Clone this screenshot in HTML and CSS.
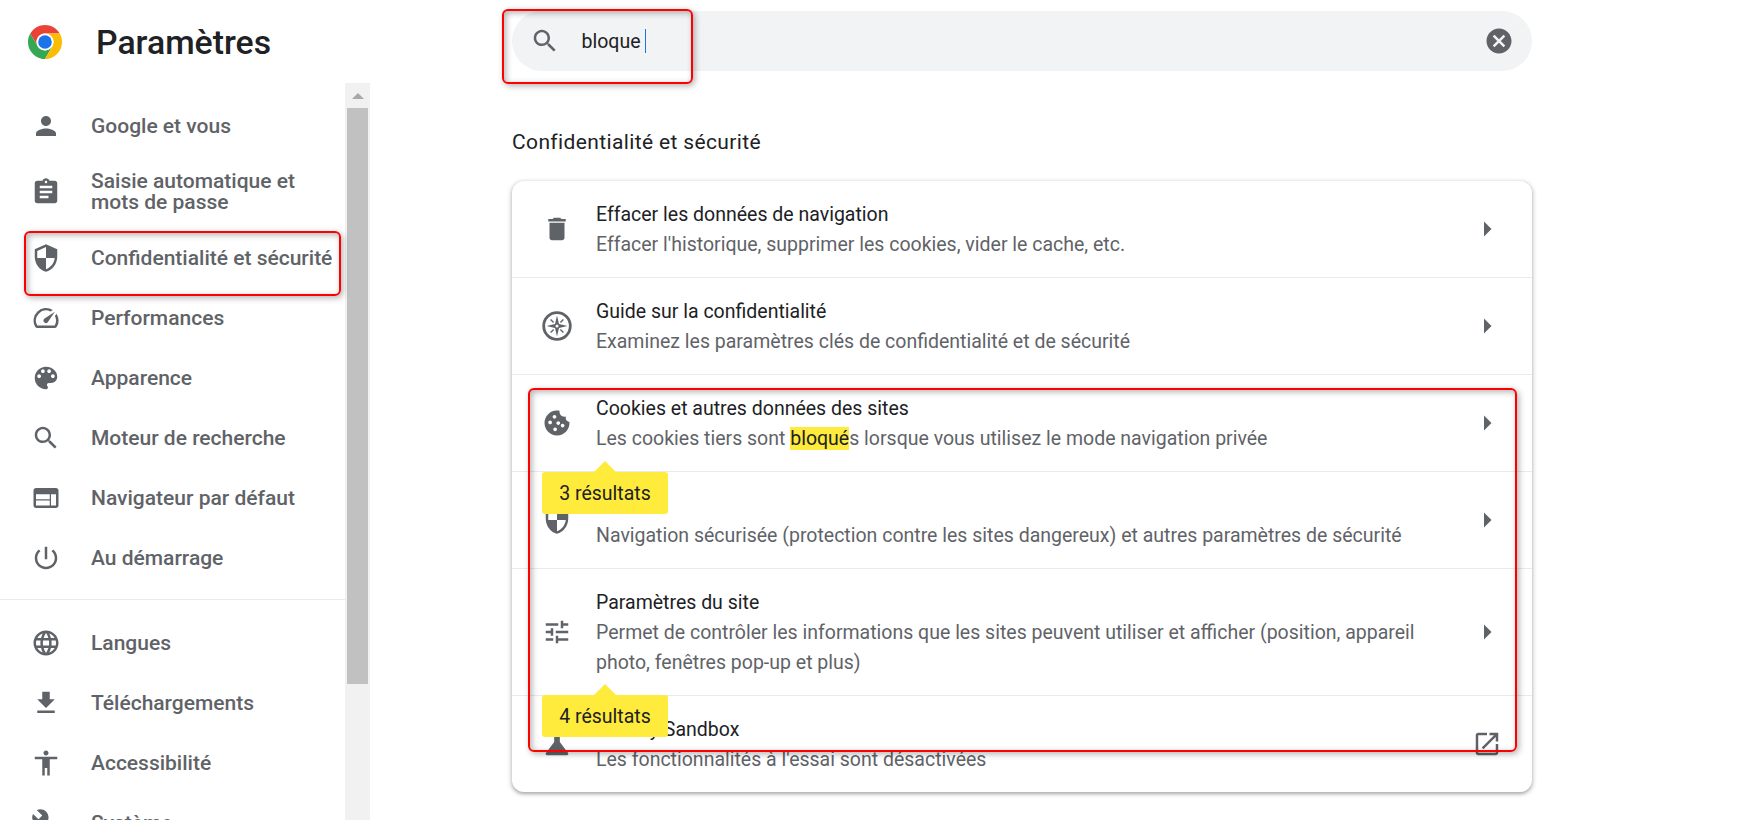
FILE: index.html
```html
<!DOCTYPE html>
<html lang="fr">
<head>
    <meta charset="UTF-8">
    <meta name="viewport" content="width=device-width, initial-scale=1.0">
    <title>Paramètres</title>
    <link rel="stylesheet" href="styles.css">
</head>
<body>

<aside class="sidebar">
    <header class="brand">
        <svg class="logo" viewBox="4 4 40 40">
            <path fill="#ea4335" d="M41.32 14H24a10 10 0 0 0-8.66 15L6.68 14A20 20 0 0 1 41.32 14z"/>
            <path fill="#34a853" d="M6.68 14l8.66 15a10 10 0 0 0 17.32 0L24 44A20 20 0 0 1 6.68 14z"/>
            <path fill="#fbbc04" d="M41.32 14H24a10 10 0 0 1 8.66 15L24 44A20 20 0 0 0 41.32 14z"/>
            <circle cx="24" cy="24" r="10" fill="#fff"/>
            <circle cx="24" cy="24" r="8" fill="#1a73e8"/>
        </svg>
        <h1>Paramètres</h1>
    </header>

    <div class="nav-wrap">
        <nav class="nav">
            <a class="nav-item">
                <svg class="icon" viewBox="0 0 24 24"><path d="M12 12c2.21 0 4-1.79 4-4s-1.79-4-4-4-4 1.79-4 4 1.79 4 4 4zm0 2c-2.67 0-8 1.34-8 4v2h16v-2c0-2.66-5.33-4-8-4z"/></svg>
                <span>Google et vous</span>
            </a>
            <a class="nav-item nav-item-tall">
                <svg class="icon" viewBox="0 0 24 24"><path d="M19 3h-4.18C14.4 1.84 13.3 1 12 1c-1.3 0-2.4.84-2.82 2H5c-1.1 0-2 .9-2 2v14c0 1.1.9 2 2 2h14c1.1 0 2-.9 2-2V5c0-1.1-.9-2-2-2zm-7 0c.55 0 1 .45 1 1s-.45 1-1 1-1-.45-1-1 .45-1 1-1zm2 14H7v-2h7v2zm3-4H7v-2h10v2zm0-4H7V7h10v2z"/></svg>
                <span>Saisie automatique et mots de passe</span>
            </a>
            <a class="nav-item">
                <svg class="icon" viewBox="0 0 24 24"><path d="M12 1L3 5v6c0 5.55 3.84 10.74 9 12 5.16-1.26 9-6.45 9-12V5l-9-4zm0 10.99h7c-.53 4.12-3.28 7.79-7 8.94V12H5V6.3l7-3.11v8.8z"/></svg>
                <span>Confidentialité et sécurité</span>
            </a>
            <a class="nav-item">
                <svg class="icon" viewBox="0 0 24 24"><path d="M20.38 8.57l-1.23 1.85a8 8 0 0 1-.22 7.58H5.07A8 8 0 0 1 15.58 6.85l1.85-1.23A10 10 0 0 0 3.35 19a2 2 0 0 0 1.72 1h13.85a2 2 0 0 0 1.74-1 10 10 0 0 0-.27-10.44zm-9.79 6.84a2 2 0 0 0 2.83 0l5.66-8.49-8.49 5.66a2 2 0 0 0 0 2.83z"/></svg>
                <span>Performances</span>
            </a>
            <a class="nav-item">
                <svg class="icon" viewBox="0 0 24 24"><path d="M12 3c-4.97 0-9 4.03-9 9s4.03 9 9 9c.83 0 1.5-.67 1.5-1.5 0-.39-.15-.74-.39-1.01-.23-.26-.38-.61-.38-.99 0-.83.67-1.5 1.5-1.5H16c2.76 0 5-2.24 5-5 0-4.42-4.03-8-9-8zm-5.5 9c-.83 0-1.5-.67-1.5-1.5S5.67 9 6.5 9 8 9.67 8 10.5 7.33 12 6.5 12zm3-4C8.67 8 8 7.33 8 6.5S8.67 5 9.5 5s1.5.67 1.5 1.5S10.33 8 9.5 8zm5 0c-.83 0-1.5-.67-1.5-1.5S13.67 5 14.5 5s1.5.67 1.5 1.5S15.33 8 14.5 8zm3 4c-.83 0-1.5-.67-1.5-1.5S16.67 9 17.5 9s1.5.67 1.5 1.5-.67 1.5-1.5 1.5z"/></svg>
                <span>Apparence</span>
            </a>
            <a class="nav-item">
                <svg class="icon" viewBox="0 0 24 24"><path d="M15.5 14h-.79l-.28-.27C15.41 12.59 16 11.11 16 9.5 16 5.91 13.09 3 9.5 3S3 5.91 3 9.5 5.91 16 9.5 16c1.61 0 3.09-.59 4.23-1.57l.27.28v.79l5 4.99L20.49 19l-4.99-5zm-6 0C7.01 14 5 11.99 5 9.5S7.01 5 9.5 5 14 7.01 14 9.5 11.99 14 9.5 14z"/></svg>
                <span>Moteur de recherche</span>
            </a>
            <a class="nav-item">
                <svg class="icon" viewBox="0 0 24 24"><path d="M20 4H4c-1.1 0-2 .9-2 2v12c0 1.1.9 2 2 2h16c1.1 0 2-.9 2-2V6c0-1.1-.9-2-2-2zm-5 14H4v-4h11v4zm0-5H4V9h11v4zm5 5h-4V9h4v9z"/></svg>
                <span>Navigateur par défaut</span>
            </a>
            <a class="nav-item">
                <svg class="icon" viewBox="0 0 24 24"><path d="M13 3h-2v10h2V3zm4.83 2.17l-1.42 1.42C17.99 7.86 19 9.81 19 12c0 3.87-3.13 7-7 7s-7-3.13-7-7c0-2.19 1.01-4.14 2.58-5.42L6.17 5.17C4.23 6.82 3 9.26 3 12c0 4.97 4.03 9 9 9s9-4.03 9-9c0-2.74-1.23-5.18-3.17-6.83z"/></svg>
                <span>Au démarrage</span>
            </a>
            <div class="nav-sep"></div>
            <a class="nav-item">
                <svg class="icon" viewBox="0 0 24 24"><path d="M11.99 2C6.47 2 2 6.48 2 12s4.47 10 9.99 10C17.52 22 22 17.52 22 12S17.52 2 11.99 2zm6.93 6h-2.95c-.32-1.25-.78-2.45-1.38-3.56 1.84.63 3.37 1.91 4.33 3.56zM12 4.04c.83 1.2 1.48 2.53 1.91 3.96h-3.82c.43-1.43 1.08-2.76 1.91-3.96zM4.26 14C4.1 13.36 4 12.69 4 12s.1-1.36.26-2h3.38c-.08.66-.14 1.32-.14 2 0 .68.06 1.34.14 2H4.26zm.82 2h2.95c.32 1.25.78 2.45 1.38 3.56-1.84-.63-3.37-1.9-4.33-3.56zm2.95-8H5.08c.96-1.66 2.49-2.93 4.33-3.56C8.81 5.55 8.35 6.75 8.03 8zM12 19.96c-.83-1.2-1.48-2.53-1.91-3.96h3.82c-.43 1.43-1.08 2.76-1.91 3.96zM14.34 14H9.66c-.09-.66-.16-1.32-.16-2 0-.68.07-1.35.16-2h4.68c.09.65.16 1.32.16 2 0 .68-.07 1.34-.16 2zm.25 5.56c.6-1.11 1.06-2.31 1.38-3.56h2.95c-.96 1.65-2.49 2.93-4.33 3.56zM16.36 14c.08-.66.14-1.32.14-2 0-.68-.06-1.34-.14-2h3.38c.16.64.26 1.31.26 2s-.1 1.36-.26 2h-3.38z"/></svg>
                <span>Langues</span>
            </a>
            <a class="nav-item">
                <svg class="icon" viewBox="0 0 24 24"><path d="M19 9h-4V3H9v6H5l7 7 7-7zM5 18v2h14v-2H5z"/></svg>
                <span>Téléchargements</span>
            </a>
            <a class="nav-item">
                <svg class="icon" viewBox="0 0 24 24"><path d="M12 2c1.1 0 2 .9 2 2s-.9 2-2 2-2-.9-2-2 .9-2 2-2zm9 7h-6v13h-2v-6h-2v6H9V9H3V7h18v2z"/></svg>
                <span>Accessibilité</span>
            </a>
            <a class="nav-item">
                <svg class="icon" viewBox="0 0 24 24"><path d="M22.7 19l-9.1-9.1c.9-2.3.4-5-1.5-6.9-2-2-5-2.4-7.4-1.3L9 6 6 9 1.6 4.7C.4 7.1.9 10.1 2.9 12.1c1.9 1.9 4.6 2.4 6.9 1.5l9.1 9.1c.4.4 1 .4 1.4 0l2.3-2.3c.5-.4.5-1.1.1-1.4z"/></svg>
                <span>Système</span>
            </a>
        </nav>
        <div class="scrollbar">
            <div class="scroll-up"></div>
            <div class="scroll-thumb"></div>
        </div>
    </div>
</aside>

<main class="main">
    <div class="search">
        <svg class="icon" viewBox="0 0 24 24"><path d="M15.5 14h-.79l-.28-.27C15.41 12.59 16 11.11 16 9.5 16 5.91 13.09 3 9.5 3S3 5.91 3 9.5 5.91 16 9.5 16c1.61 0 3.09-.59 4.23-1.57l.27.28v.79l5 4.99L20.49 19l-4.99-5zm-6 0C7.01 14 5 11.99 5 9.5S7.01 5 9.5 5 14 7.01 14 9.5 11.99 14 9.5 14z"/></svg>
        <span class="search-text">bloque</span>
        <span class="caret"></span>
        <svg class="icon search-clear" viewBox="0 0 24 24"><path d="M12 2C6.47 2 2 6.47 2 12s4.47 10 10 10 10-4.47 10-10S17.53 2 12 2zm5 13.59L15.59 17 12 13.41 8.41 17 7 15.59 10.59 12 7 8.41 8.41 7 12 10.59 15.59 7 17 8.41 13.41 12 17 15.59z"/></svg>
    </div>

    <h2 class="section-title">Confidentialité et sécurité</h2>

    <section class="card">
        <div class="row">
            <div class="row-icon">
                <svg class="icon" viewBox="0 0 24 24"><path d="M6 19c0 1.1.9 2 2 2h8c1.1 0 2-.9 2-2V7H6v12zM19 4h-3.5l-1-1h-5l-1 1H5v2h14V4z"/></svg>
            </div>
            <div class="row-text">
                <div class="row-title">Effacer les données de navigation</div>
                <div class="row-sub">Effacer l'historique, supprimer les cookies, vider le cache, etc.</div>
            </div>
            <div class="row-action">
                <svg class="arrow" viewBox="0 0 24 24"><path d="M10 17l5-5-5-5v10z"/></svg>
            </div>
        </div>
        <div class="row">
            <div class="row-icon">
                <svg class="icon" viewBox="0 0 30 30">
                    <circle class="compass-ring" cx="15" cy="15" r="13.3"/>
                    <path d="M15 4.5l2 8.5 8.5 2-8.5 2-2 8.5-2-8.5-8.5-2 8.5-2z"/>
                    <path class="compass-ticks" d="M8.6 8.6l3 3M21.4 8.6l-3 3M8.6 21.4l3-3M21.4 21.4l-3-3"/>
                    <circle cx="15" cy="15" r="1.5" fill="#fff"/>
                </svg>
            </div>
            <div class="row-text">
                <div class="row-title">Guide sur la confidentialité</div>
                <div class="row-sub">Examinez les paramètres clés de confidentialité et de sécurité</div>
            </div>
            <div class="row-action">
                <svg class="arrow" viewBox="0 0 24 24"><path d="M10 17l5-5-5-5v10z"/></svg>
            </div>
        </div>
        <div class="row">
            <div class="row-icon">
                <svg class="icon" viewBox="0 0 24 24">
                    <path d="M21.95 10.99c-1.79-.03-3.7-1.95-2.68-4.22-2.97 1-5.78-1.59-5.19-4.56C7.11.74 2 6.41 2 12c0 5.52 4.48 10 10 10 5.89 0 10.54-5.08 9.95-11.01zM6.5 13c-.83 0-1.5-.67-1.5-1.5S5.67 10 6.5 10s1.5.67 1.5 1.5S7.33 13 6.5 13zm3.5-4.5C9.17 8.5 8.5 7.83 8.5 7S9.17 5.5 10 5.5s1.5.67 1.5 1.5-.67 1.5-1.5 1.5zm3 5c-.83 0-1.5-.67-1.5-1.5s.67-1.5 1.5-1.5 1.5.67 1.5 1.5-.67 1.5-1.5 1.5zm-2.5 5c-.83 0-1.5-.67-1.5-1.5s.67-1.5 1.5-1.5 1.5.67 1.5 1.5-.67 1.5-1.5 1.5zm6-3c-.83 0-1.5-.67-1.5-1.5s.67-1.5 1.5-1.5 1.5.67 1.5 1.5-.67 1.5-1.5 1.5z"/>
                </svg>
            </div>
            <div class="row-text">
                <div class="row-title">Cookies et autres données des sites</div>
                <div class="row-sub">Les cookies tiers sont <mark class="hit">bloqué</mark>s lorsque vous utilisez le mode navigation privée</div>
            </div>
            <div class="row-action">
                <svg class="arrow" viewBox="0 0 24 24"><path d="M10 17l5-5-5-5v10z"/></svg>
            </div>
        </div>
        <div class="row">
            <div class="row-icon">
                <svg class="icon" viewBox="0 0 24 24"><path d="M12 1L3 5v6c0 5.55 3.84 10.74 9 12 5.16-1.26 9-6.45 9-12V5l-9-4zm0 10.99h7c-.53 4.12-3.28 7.79-7 8.94V12H5V6.3l7-3.11v8.8z"/></svg>
            </div>
            <div class="row-text">
                <div class="row-title">Sécurité</div>
                <div class="row-sub">Navigation sécurisée (protection contre les sites dangereux) et autres paramètres de sécurité</div>
            </div>
            <div class="row-action">
                <svg class="arrow" viewBox="0 0 24 24"><path d="M10 17l5-5-5-5v10z"/></svg>
            </div>
        </div>
        <div class="row">
            <div class="row-icon">
                <svg class="icon" viewBox="0 0 24 24"><path d="M3 17v2h6v-2H3zM3 5v2h10V5H3zm10 16v-2h8v-2h-8v-2h-2v6h2zM7 9v2H3v2h4v2h2V9H7zm14 4v-2H11v2h10zm-6-4h2V7h4V5h-4V3h-2v6z"/></svg>
            </div>
            <div class="row-text">
                <div class="row-title">Paramètres du site</div>
                <div class="row-sub">Permet de contrôler les informations que les sites peuvent utiliser et afficher (position, appareil photo, fenêtres pop-up et plus)</div>
            </div>
            <div class="row-action">
                <svg class="arrow" viewBox="0 0 24 24"><path d="M10 17l5-5-5-5v10z"/></svg>
            </div>
        </div>
        <div class="row">
            <div class="row-icon">
                <svg class="icon icon-flask" viewBox="0 0 24 24"><path d="M19.8 18.4 14 10.67V6.5l1.35-1.69c.26-.33.03-.81-.39-.81H9.04c-.42 0-.65.48-.39.81L10 6.5v4.17L4.2 18.4c-.49.66-.02 1.6.8 1.6h14c.82 0 1.29-.94.8-1.6z"/></svg>
            </div>
            <div class="row-text">
                <div class="row-title">Privacy Sandbox</div>
                <div class="row-sub">Les fonctionnalités à l'essai sont désactivées</div>
            </div>
            <div class="row-action">
                <svg class="icon" viewBox="0 0 24 24"><path d="M19 19H5V5h7V3H5c-1.11 0-2 .9-2 2v14c0 1.1.89 2 2 2h14c1.1 0 2-.9 2-2v-7h-2v7zM14 3v2h3.59l-9.83 9.83 1.41 1.41L19 6.41V10h2V3h-7z"/></svg>
            </div>
        </div>
    </section>
</main>

<!-- search result bubbles -->
<div class="bubble bubble-cookies">3 résultats</div>
<div class="bubble bubble-site">4 résultats</div>

<!-- red boxes drawn on the screenshot -->
<div class="mark-box mark-search"></div>
<div class="mark-box mark-nav"></div>
<div class="mark-box mark-rows"></div>

</body>
</html>
```

FILE: styles.css
```css
* {
    box-sizing: border-box;
}
html, body {
    height: 100%;
}
body {
    margin: 0;
    display: flex;
    overflow: hidden;
    background: #fff;
    color: #202124;
    font-family: Roboto, "Liberation Sans", sans-serif;
    font-size: 19.5px;
}
.icon {
    display: block;
    flex: none;
    width: 30px;
    height: 30px;
    fill: #5f6368;
}

/* sidebar */
.sidebar {
    flex: none;
    width: 370px;
    height: 820px;
    display: flex;
    flex-direction: column;
}
.brand {
    flex: none;
    height: 83px;
    display: flex;
    align-items: center;
    padding-left: 28px;
}
.logo {
    display: block;
    width: 34px;
    height: 34px;
}
.brand h1 {
    margin: 2px 0 0 34px;
    font-size: 33.8px;
    font-weight: 500;
    line-height: 40px;
}
.nav-wrap {
    flex: 1;
    min-height: 0;
    display: flex;
}
.nav {
    width: 345px;
    padding-top: 13px;
    overflow: hidden;
}
.nav-item {
    height: 60px;
    display: flex;
    align-items: center;
    gap: 30px;
    padding-left: 31px;
    color: #5f6368;
    font-size: 21px;
    font-weight: 500;
    line-height: 21px;
}
.nav-item-tall {
    height: 72px;
}
.nav-sep {
    height: 1px;
    margin: 11px 0 13px;
    background: #e8eaed;
}
.scrollbar {
    width: 25px;
    background: #f1f1f1;
}
.scroll-up {
    width: 12px;
    height: 16px;
    margin: 0 auto 9px;
    border-left: 6px solid transparent;
    border-right: 6px solid transparent;
    border-bottom: 6px solid #a8a8a8;
    border-top: 10px solid transparent;
}
.scroll-thumb {
    height: 576px;
    margin: 0 2px;
    background: #c1c1c1;
}

/* main column */
.main {
    flex: none;
    width: 1020px;
    margin-left: 142px;
}
.search {
    height: 60px;
    margin-top: 11px;
    display: flex;
    align-items: center;
    padding: 0 18.5px 0 17.5px;
    background: #f1f3f4;
    border-radius: 30px;
}
.search-text {
    margin-left: 22px;
}
.caret {
    width: 1px;
    height: 24px;
    margin-left: 4px;
    background: #1a73e8;
}
.search-clear {
    margin-left: auto;
}
.section-title {
    height: 30px;
    margin: 56px 0 24px;
    font-size: 21px;
    font-weight: 400;
    line-height: 30px;
    letter-spacing: 0.37px;
}
.card {
    background: #fff;
    border-radius: 12px;
    box-shadow: 0 1.5px 3px rgba(60, 64, 67, 0.3), 0 1.5px 4.5px 1.5px rgba(60, 64, 67, 0.15);
}
.row {
    display: flex;
    align-items: center;
    padding: 18px 27px 18px 30px;
    border-top: 1px solid #e8eaed;
    line-height: 30px;
}
.row:first-child {
    border-top: none;
}
.row-icon {
    flex: none;
    width: 30px;
    display: flex;
    justify-content: center;
}
.icon-flask {
    width: 34px;
    height: 34px;
}
.row-text {
    flex: 1;
    margin: 1px 36px -1px 24px;
}
.row-sub {
    color: #5f6368;
}
.hit {
    background: #ffeb3b;
    color: #202124;
}
.row-action {
    flex: none;
    width: 36px;
    display: flex;
    justify-content: center;
}
.arrow {
    display: block;
    width: 36px;
    height: 36px;
    fill: #5f6368;
}
.compass-ring {
    fill: none;
    stroke: #5f6368;
    stroke-width: 2.8;
}
.compass-ticks {
    fill: none;
    stroke: #5f6368;
    stroke-width: 1.4;
}

/* overlays */
.bubble {
    position: absolute;
    left: 542px;
    width: 126px;
    height: 42px;
    display: flex;
    align-items: center;
    justify-content: center;
    background: #ffeb3b;
    border-radius: 3px;
    color: #202124;
}
.bubble::before {
    content: "";
    position: absolute;
    top: -11px;
    left: 52px;
    border-left: 11px solid transparent;
    border-right: 11px solid transparent;
    border-bottom: 11px solid #ffeb3b;
}
.bubble-cookies {
    top: 472px;
}
.bubble-site {
    top: 695px;
}
.mark-box {
    position: absolute;
    border: 2px solid #f00;
    border-radius: 6px;
    box-shadow: 2px 2px 6px rgba(0, 0, 0, 0.3), inset 2px 2px 6px rgba(0, 0, 0, 0.3);
}
.mark-search {
    left: 502px;
    top: 9px;
    width: 191px;
    height: 75px;
}
.mark-nav {
    left: 23.5px;
    top: 231px;
    width: 317px;
    height: 65px;
}
.mark-rows {
    left: 528px;
    top: 388px;
    width: 989px;
    height: 364px;
}
```
